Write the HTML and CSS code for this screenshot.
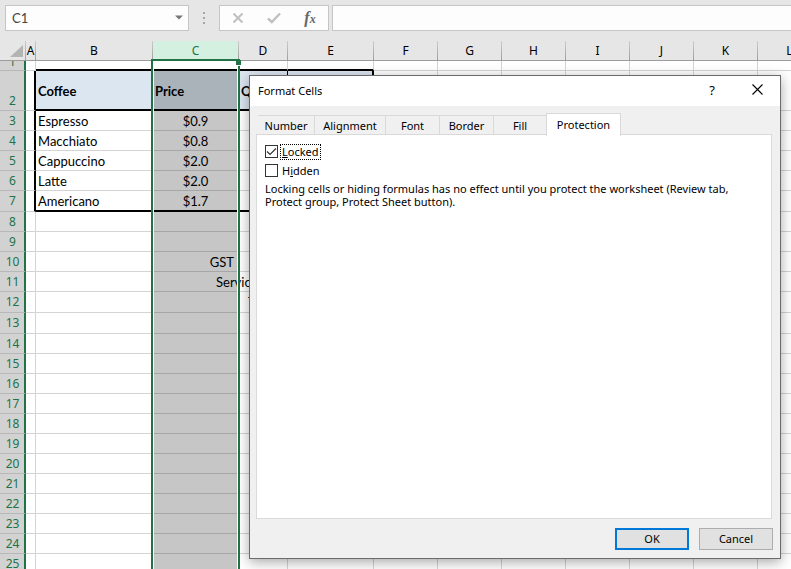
FILE: index.html
```html
<!DOCTYPE html>
<html lang="en">
<head>
  <meta charset="UTF-8">
  <meta name="viewport" content="width=device-width, initial-scale=1.0">
  <title>Format Cells</title>
  <link rel="stylesheet" href="styles.css">
</head>
<body>
  <div class="formula-bar">
    <div class="name-box">
      <input type="text" value="C1" aria-label="Name box">
      <button type="button" aria-label="Open name list">
        <svg width="8" height="5" viewBox="0 0 8 5"><path d="M0 0.5h8L4 4.5z" fill="#777"/></svg>
      </button>
    </div>
    <svg class="dots" width="2" height="12" viewBox="0 0 2 12"><path d="M0 0h2v2H0zM0 5h2v2H0zM0 10h2v2H0z" fill="#a6a6a6"/></svg>
    <div class="tools">
      <button type="button" aria-label="Cancel entry">
        <svg width="12" height="12" viewBox="0 0 12 12"><path d="M1.5 1.5l9 9M10.5 1.5l-9 9" fill="none" stroke="#c0c0c0" stroke-width="2"/></svg>
      </button>
      <button type="button" aria-label="Enter">
        <svg width="14" height="12" viewBox="0 0 14 12"><path d="M1 6.5L4.8 10L13 1.5" fill="none" stroke="#c0c0c0" stroke-width="2.4"/></svg>
      </button>
      <button type="button" class="fx" aria-label="Insert function"><i>f</i><i class="x">x</i></button>
    </div>
    <input type="text" class="formula" aria-label="Formula">
  </div>

  <div class="sheet">
    <table>
      <colgroup>
        <col class="head"><col class="a"><col class="b"><col class="c"><col class="d"><col class="e">
        <col class="std"><col class="std"><col class="std"><col class="std"><col class="std"><col class="std"><col class="std">
      </colgroup>
      <thead>
        <tr>
          <th class="corner"><svg width="13" height="12" viewBox="0 0 13 12"><path d="M13 0v12H0z" fill="#b4b4b4"/></svg></th>
          <th>A</th><th>B</th>
          <th class="selected">C<span class="selection"></span></th>
          <th>D</th><th>E</th><th>F</th><th>G</th><th>H</th><th>I</th><th>J</th><th>K</th><th>L</th>
        </tr>
      </thead>
      <tbody>
        <tr class="short"><th><span>1</span></th><td></td><td></td><td></td><td></td><td></td><td></td><td></td><td></td><td></td><td></td><td></td><td></td></tr>
        <tr class="title"><th>2</th><td></td><td>Coffee</td><td>Price</td><td>Qty</td><td></td><td></td><td></td><td></td><td></td><td></td><td></td><td></td></tr>
        <tr class="item"><th>3</th><td></td><td>Espresso</td><td>$0.9</td><td></td><td></td><td></td><td></td><td></td><td></td><td></td><td></td><td></td></tr>
        <tr class="item"><th>4</th><td></td><td>Macchiato</td><td>$0.8</td><td></td><td></td><td></td><td></td><td></td><td></td><td></td><td></td><td></td></tr>
        <tr class="item"><th>5</th><td></td><td>Cappuccino</td><td>$2.0</td><td></td><td></td><td></td><td></td><td></td><td></td><td></td><td></td><td></td></tr>
        <tr class="item"><th>6</th><td></td><td>Latte</td><td>$2.0</td><td></td><td></td><td></td><td></td><td></td><td></td><td></td><td></td><td></td></tr>
        <tr class="item last tall"><th>7</th><td></td><td>Americano</td><td>$1.7</td><td></td><td></td><td></td><td></td><td></td><td></td><td></td><td></td><td></td></tr>
        <tr><th>8</th><td></td><td></td><td></td><td></td><td></td><td></td><td></td><td></td><td></td><td></td><td></td><td></td></tr>
        <tr><th>9</th><td></td><td></td><td></td><td></td><td></td><td></td><td></td><td></td><td></td><td></td><td></td><td></td></tr>
        <tr><th>10</th><td></td><td></td><td class="gst">GST</td><td></td><td></td><td></td><td></td><td></td><td></td><td></td><td></td><td></td></tr>
        <tr><th>11</th><td></td><td></td><td class="service">Service</td><td></td><td></td><td></td><td></td><td></td><td></td><td></td><td></td><td></td></tr>
        <tr class="tall"><th>12</th><td></td><td></td><td></td><td class="total">Total</td><td></td><td></td><td></td><td></td><td></td><td></td><td></td><td></td></tr>
        <tr class="tall"><th>13</th><td></td><td></td><td></td><td></td><td></td><td></td><td></td><td></td><td></td><td></td><td></td><td></td></tr>
        <tr><th>14</th><td></td><td></td><td></td><td></td><td></td><td></td><td></td><td></td><td></td><td></td><td></td><td></td></tr>
        <tr><th>15</th><td></td><td></td><td></td><td></td><td></td><td></td><td></td><td></td><td></td><td></td><td></td><td></td></tr>
        <tr><th>16</th><td></td><td></td><td></td><td></td><td></td><td></td><td></td><td></td><td></td><td></td><td></td><td></td></tr>
        <tr><th>17</th><td></td><td></td><td></td><td></td><td></td><td></td><td></td><td></td><td></td><td></td><td></td><td></td></tr>
        <tr><th>18</th><td></td><td></td><td></td><td></td><td></td><td></td><td></td><td></td><td></td><td></td><td></td><td></td></tr>
        <tr><th>19</th><td></td><td></td><td></td><td></td><td></td><td></td><td></td><td></td><td></td><td></td><td></td><td></td></tr>
        <tr><th>20</th><td></td><td></td><td></td><td></td><td></td><td></td><td></td><td></td><td></td><td></td><td></td><td></td></tr>
        <tr><th>21</th><td></td><td></td><td></td><td></td><td></td><td></td><td></td><td></td><td></td><td></td><td></td><td></td></tr>
        <tr><th>22</th><td></td><td></td><td></td><td></td><td></td><td></td><td></td><td></td><td></td><td></td><td></td><td></td></tr>
        <tr><th>23</th><td></td><td></td><td></td><td></td><td></td><td></td><td></td><td></td><td></td><td></td><td></td><td></td></tr>
        <tr><th>24</th><td></td><td></td><td></td><td></td><td></td><td></td><td></td><td></td><td></td><td></td><td></td><td></td></tr>
        <tr><th>25</th><td></td><td></td><td></td><td></td><td></td><td></td><td></td><td></td><td></td><td></td><td></td><td></td></tr>
      </tbody>
    </table>
  </div>

  <form class="dialog" role="dialog" aria-labelledby="dialog-title">
    <div class="titlebar">
      <span id="dialog-title">Format Cells</span>
      <button type="button" class="help">?</button>
      <button type="button" aria-label="Close">
        <svg width="11" height="11" viewBox="0 0 11 11"><path d="M0.5 0.5l10 10M10.5 0.5l-10 10" fill="none" stroke="#000" stroke-width="1.1"/></svg>
      </button>
    </div>
    <div class="tabs" role="tablist">
      <button type="button" role="tab" class="number">Number</button>
      <button type="button" role="tab" class="alignment">Alignment</button>
      <button type="button" role="tab">Font</button>
      <button type="button" role="tab">Border</button>
      <button type="button" role="tab" class="fill">Fill</button>
      <button type="button" role="tab" class="active" aria-selected="true">Protection</button>
    </div>
    <div class="pane" role="tabpanel">
      <div class="option">
        <input type="checkbox" id="locked" checked>
        <label for="locked" class="focused"><u>L</u>ocked</label>
      </div>
      <div class="option">
        <input type="checkbox" id="hidden">
        <label for="hidden">H<u>i</u>dden</label>
      </div>
      <p>Locking cells or hiding formulas has no effect until you protect the worksheet (Review tab,<br>Protect group, Protect Sheet button).</p>
    </div>
    <div class="actions">
      <button type="button" class="ok">OK</button>
      <button type="button">Cancel</button>
    </div>
  </form>
</body>
</html>
```
FILE: styles.css
```css
* {
  box-sizing: border-box;
}

body {
  margin: 0;
  height: 100vh;
  display: flex;
  flex-direction: column;
  overflow: hidden;
  position: relative;
  background-color: #e6e6e6;
  color: #000;
  font-family: "Noto Sans", "Open Sans", sans-serif;
  font-size: 11px;
}

button,
input {
  font: inherit;
  color: inherit;
  margin: 0;
  padding: 0;
}

/* formula bar */
.formula-bar {
  display: flex;
  align-items: center;
  flex: none;
  height: 41px;
  padding: 0 0 5px 5px;

  button {
    display: flex;
    align-items: center;
    justify-content: center;
    border: none;
    background: none;
  }
}

.name-box,
.tools,
.formula {
  height: 26px;
  border: 1px solid #c6c6c6;
  background-color: #fdfdfd;
}

.name-box {
  display: flex;
  width: 184px;

  input {
    flex: 1;
    min-width: 0;
    padding-left: 6px;
    border: none;
    outline: none;
    background: none;
    color: #444;
    font-family: Lato, sans-serif;
    font-size: 13px;
  }

  button {
    width: 18px;
    padding-bottom: 2px;
  }
}

.dots {
  margin: 0 14px;
}

.tools {
  display: flex;
  width: 110px;
  margin-right: 3px;

  button {
    flex: 1;
  }

  .fx {
    font-family: "Liberation Serif", serif;
    font-size: 16px;
    font-weight: bold;
    color: #666;
  }

  .x {
    font-size: 12px;
    padding-top: 3px;
  }
}

.formula {
  flex: 1;
  min-width: 0;
  border-right: none;
  outline: none;
}

/* grid */
.sheet {
  flex: 1;
  min-height: 0;
  overflow: hidden;
  background-color: white;
}

table {
  width: 100%;
  table-layout: fixed;
  border-collapse: separate;
  border-spacing: 0;
  font-family: Lato, sans-serif;
  font-size: 13px;
  line-height: 16px;
}

.head { width: 26px; }
.a { width: 10px; }
.b { width: 117px; }
.c { width: 86px; }
.d { width: 49px; }
.e { width: 86px; }
.std { width: 64px; }

tr {
  height: 20px;
}

.tall {
  height: 21px;
}

td {
  padding: 0 2px;
  white-space: nowrap;
  border-right: 1px solid #d4d4d4;
  border-bottom: 1px solid #d4d4d4;
}

th {
  padding: 0;
  font-family: "Noto Sans", "Open Sans", sans-serif;
  font-size: 12px;
  font-weight: normal;
}

thead th {
  background-color: #e6e6e6;
  border-right: 1px solid;
  border-bottom: 1px solid #9b9b9b;
  border-image: linear-gradient(#cfcfcf, #9b9b9b) 1;
}

.corner svg {
  display: block;
  margin: 0 2px 0 auto;
}

.selected {
  position: relative;
  background-color: #d3f0e0;
  color: #217346;
}

.selection {
  position: absolute;
  z-index: 1;
  top: 18px;
  left: -2px;
  right: -2px;
  height: 100vh;
  border: 2px solid #217346;
  box-shadow: inset 1px 0 white, inset -1px 0 white;
  pointer-events: none;

  /* fill handle */
  &::after {
    content: "";
    position: absolute;
    top: -1px;
    right: -3px;
    width: 5px;
    height: 5px;
    background-color: #217346;
    border-bottom: 1px solid white;
    box-sizing: content-box;
  }
}

tbody th {
  padding-left: 1px;
  background-color: #d2d2d2;
  color: #217346;
  border-right: 2px solid #217346;
  border-bottom: 1px solid #b8b8b8;
}

tbody td:nth-child(4) {
  background-color: #c6c6c6;
  border-bottom-color: #a6a6a6;
}

.short {
  height: 10px;
  line-height: 8px;

  span {
    display: flex;
    align-items: flex-end;
    justify-content: center;
    height: 5px;
    margin-bottom: 4px;
    overflow: hidden;
  }

  td:nth-child(4) {
    background-color: white;
  }

  td:nth-child(n+3):nth-child(-n+6) {
    border-bottom: 2px solid black;
  }
}

.title {
  height: 40px;

  th {
    padding-bottom: 1px;
    vertical-align: bottom;
  }

  td {
    padding-top: 2px;
  }

  td:nth-child(n+3):nth-child(-n+6) {
    font-weight: bold;
    background-color: #dce6f1;
    border-right-color: black;
    border-bottom: 2px solid black;
  }

  td:nth-child(4) {
    background-color: #abb3ba !important;
  }
}

.title,
.item {
  td:nth-child(2) {
    border-right: 2px solid black;
  }

  td:nth-child(6) {
    border-right: 2px solid black;
  }
}

.item td:nth-child(4) {
  text-align: center;
}

.last td:nth-child(n+3):nth-child(-n+6) {
  border-bottom: 2px solid black;
}

td.gst {
  text-align: right;
  padding-right: 4px;
}

td.service {
  padding-left: 63px;
}

td.total {
  padding-left: 9px;
}

/* format cells window */
.dialog {
  position: absolute;
  z-index: 2;
  top: 75px;
  left: 249px;
  right: 10px;
  bottom: 10px;
  display: flex;
  flex-direction: column;
  border: 1px solid #6b6b6b;
  background-color: #f0f0f0;
  box-shadow: 0 3px 12px rgba(0, 0, 0, 0.35);
}

.titlebar {
  display: flex;
  flex: none;
  height: 30px;
  align-items: center;
  padding: 0 0 2px 8px;
  background-color: white;

  span {
    flex: 1;
  }

  button {
    width: 46px;
    border: none;
    background: none;
  }

  .help {
    width: 44px;
    font-size: 13px;
  }
}

.tabs {
  display: flex;
  align-items: flex-end;
  height: 29px;
  flex: none;
  padding-left: 8px;

  button {
    width: 54px;
    height: 20px;
    border: 1px solid #d9d9d9;
    border-left: none;
    border-bottom: none;
    background-color: #f0f0f0;
  }

  .number {
    width: 57px;
  }

  .alignment {
    width: 71px;
  }

  .fill {
    width: 52px;
    border-right: none;
  }

  .active {
    position: relative;
    width: 75px;
    height: 23px;
    margin-bottom: -1px;
    padding-bottom: 2px;
    border-left: 1px solid #d9d9d9;
    background-color: white;
  }
}

.pane {
  flex: 1;
  margin: -1px 8px 0 6px;
  padding: 7px 8px;
  border: 1px solid #d9d9d9;
  background-color: white;

  p {
    margin: 2px 0 0;
    line-height: 13px;
  }
}

.option {
  display: flex;
  align-items: center;
  gap: 2px;
  height: 19px;

  input {
    appearance: none;
    width: 13px;
    height: 13px;
    border: 1px solid #333;
    background-color: white;
  }

  input:checked {
    background-image: url("data:image/svg+xml,%3Csvg xmlns='http://www.w3.org/2000/svg' viewBox='0 0 11 11'%3E%3Cpath d='M1 5.5L4 8.5L10 2.5' fill='none' stroke='%23333' stroke-width='1.2'/%3E%3C/svg%3E");
  }

  label {
    padding: 0 1px;
    line-height: 14px;
    border: 1px solid transparent;
  }

  .focused {
    border: 1px dotted black;
  }
}

.actions {
  display: flex;
  flex: none;
  justify-content: flex-end;
  gap: 10px;
  padding: 9px 7px 8px;

  button {
    width: 74px;
    height: 22px;
    padding-bottom: 1px;
    border: 1px solid #adadad;
    background-color: #e1e1e1;
  }

  .ok {
    border: 2px solid #0078d7;
  }
}
```
